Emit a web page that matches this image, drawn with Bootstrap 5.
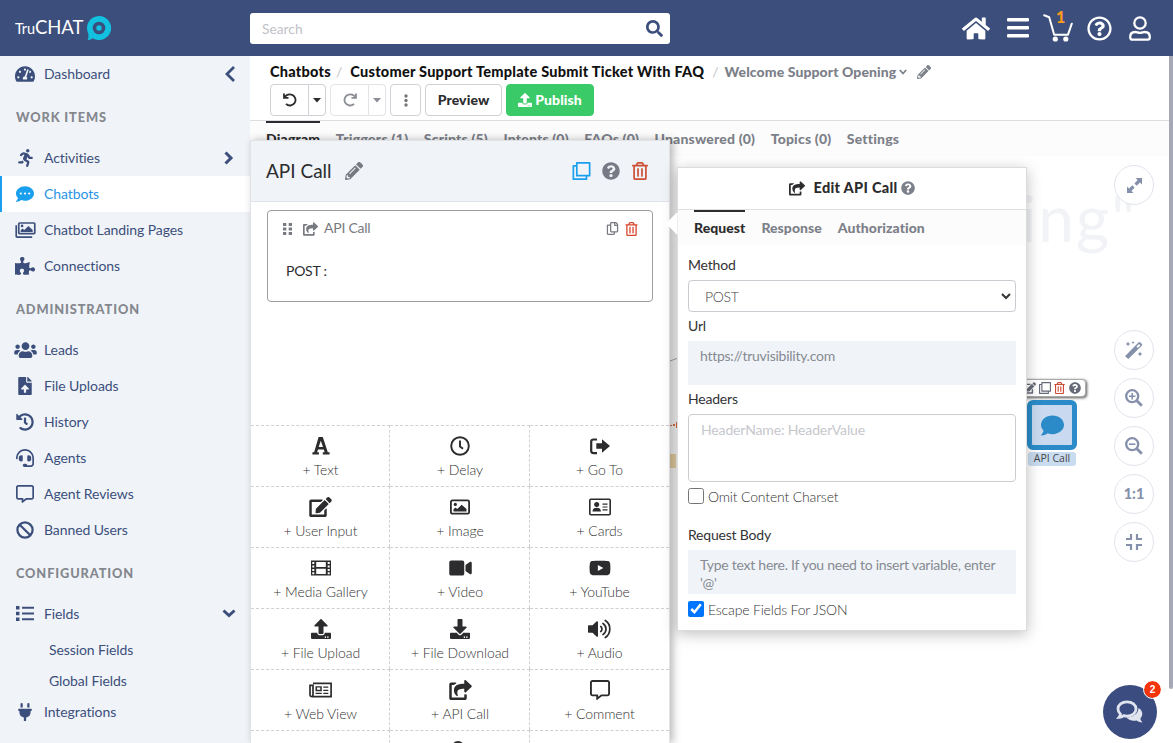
<!DOCTYPE html>
<html lang="en">
<head>
<meta charset="utf-8">
<meta name="viewport" content="width=device-width, initial-scale=1">
<title>TruCHAT</title>
<link href="https://cdn.jsdelivr.net/npm/bootstrap@5.3.0/dist/css/bootstrap.min.css" rel="stylesheet">
<style>
:root{--navy:#3c4f7c;--side:#f0f4f8;--mute:#7c8089;--ink:#2c2c2e}
html,body{height:100%;overflow:hidden}
body{font-family:Lato,"Liberation Sans",sans-serif;font-size:14px;line-height:18px;color:var(--ink);background:#fff}
svg{display:block;fill:currentColor;flex:none}
.topbar{height:56px;background:var(--navy);color:#fff;flex:none}
.logo{width:250px;padding-left:15px;letter-spacing:-.1px}
.logo small{font-size:14.5px}.logo span{font-size:18.5px}
.search{width:420px;height:31px}
.search .form-control{height:31px;font-size:13.8px;border:0;border-radius:3px;padding:0 36px 0 12px;box-shadow:none}
.search .form-control::placeholder{color:#bfc2c8;opacity:1}
.search svg{position:absolute;right:7px;top:7px;color:var(--navy)}
.count{position:absolute;left:13px;top:-6px;color:#ff9a1f;font-size:16px;font-weight:900}
.sidebar{width:250px;background:var(--side);color:var(--navy);flex:none}
.sidebar .item{height:36px;padding:0 14px 1px 12px;display:flex;align-items:center;letter-spacing:-.09px}
.sidebar .item i{width:26px;margin-right:6px;display:flex;justify-content:center}
.sidebar .item.on{background:#fff;color:#2a94e8;border-left:2px solid #1a9fee;padding-left:10px}
.sidebar .item.on i{color:#1a9fee}
.sidebar .group{height:48px;padding:1px 16px 0;display:flex;align-items:center;font-size:12.8px;font-weight:900;letter-spacing:.88px;color:#84878e}
.sub{padding:2px 0 0 49px;height:62px}
.sub div{height:31px;line-height:31px;letter-spacing:-.1px}
.crumbs{height:32px;padding-left:20px;font-weight:900;color:#111}
.crumbs .c1,.crumbs .c2{font-size:14.5px;letter-spacing:.25px}
.crumbs .c3{letter-spacing:.1px}
.crumbs .sep{color:#c5c5c8;font-weight:400}
.tools{height:33px;padding-left:20px;gap:4px}
.tools .btn{height:32px;font-size:14px;font-weight:900;letter-spacing:.1px;line-height:18px;padding:0;background:#fff;border:1px solid #cfd1d6;border-radius:4px;display:flex;align-items:center;justify-content:center;color:var(--ink)}
.tools .btn-group .btn:first-child{border-radius:4px 0 0 4px;width:39px}
.tools .btn-group .btn:last-child{border-radius:0 4px 4px 0;width:18px}
.tools .kebab{width:31px}
.tools .preview{width:77px}
.tools .btn.go{width:88px;background:#3bca68;border-color:#3bca68;color:#fff}
.tools .off .btn{color:#8b8e95;border-color:#e3e4e7}
.tabsrow{height:36px;background:#fcfcfc;border-top:1px solid #dcdee1;padding-left:16px;gap:15.5px;font-weight:900;letter-spacing:.19px;color:var(--mute)}
.tabsrow div{padding-top:9px}
.tabsrow .on{color:var(--ink);border-top:2px solid var(--ink);padding-top:7px}
.stage{flex:1;background:#fff}
.ghost{position:absolute;right:36px;top:22px;font-size:64px;line-height:80px;letter-spacing:2px;color:#f2f3f7;font-weight:400;white-space:nowrap}
.rounds{position:absolute;right:19px;top:9px;display:flex;flex-direction:column;gap:8px}
.rounds div{width:40px;height:40px;border:1px solid #e0e5ec;border-radius:50%;background:#fff;display:flex;align-items:center;justify-content:center;color:#8590ab;font-weight:900;font-size:14.5px}
.node{position:absolute;left:777px;top:244px;width:50px;height:50px;border:5px solid #2a8bc8;border-radius:6px;background:#c9daf0;color:#2a8bc8;display:flex;align-items:center;justify-content:center}
.nodelabel{position:absolute;left:778px;top:296px;width:48px;height:14px;background:#c9dcf0;border-radius:3px;font:10.5px/13px "Open Sans",sans-serif;text-align:center;color:#444;white-space:nowrap}
.nodetools{position:absolute;right:87px;top:223px;height:18px;padding:0 4px 0 2px;border:1px solid #aaa;border-radius:4px;box-shadow:1px 1px 3px #555;background:#fff;display:flex;align-items:center;gap:3px;color:#666a78}
.scroller{position:absolute;right:0;top:0;width:4px;height:633px;background:#a5a8b5;border-radius:0 0 3px 3px}
.launcher{position:absolute;right:16px;bottom:4px;width:54px;height:54px;border-radius:50%;background:#3b4d80;color:#dfe4ee;display:flex;align-items:center;justify-content:center}
.launcher b{position:absolute;left:41px;top:-4px;width:17px;height:17px;border-radius:50%;background:#f4350c;color:#fff;outline:1.5px solid #fff;font:700 10px/17px "Liberation Sans",sans-serif;text-align:center}
.panel{position:absolute;left:0;top:84px;width:420px;height:603px;background:#fff;border:1px solid #e2e3e5;border-bottom:0;box-shadow:3px 0 8px rgba(0,0,0,.28)}
.panelhead{height:61px;background:var(--side);border-bottom:1px solid #dfe2e6;padding:0 21px 1px 15px;font-size:19px}
.unit{margin:8px 16px 0;height:92px;border:1px solid #999ca1;border-radius:4px;flex:none;letter-spacing:-.25px}
.tiles{flex:none;height:318px;overflow:hidden;display:grid;grid-template-columns:139px 140px 139px;grid-auto-rows:61px}
.tiles div{border-top:1px dashed #d0d0d0;border-right:1px dashed #d0d0d0;display:flex;flex-direction:column;align-items:center;padding:10px 0 0 1px;color:#333;font-weight:300;font-size:14px;letter-spacing:-.08px}
.tiles div:nth-child(3n){border-right:0;padding-left:0}
.tiles svg{color:var(--ink);margin-bottom:5px;height:20px}
.tiles span{height:18px;white-space:nowrap}
.pop{position:absolute;left:427px;top:111px;width:350px;height:464px;background:#fff;border:1px solid #dcdcdc;box-shadow:0 3px 14px rgba(0,0,0,.25)}
.pop:before{content:"";position:absolute;left:-9px;top:47px;width:17px;height:17px;background:#fff;transform:rotate(45deg);clip-path:polygon(0 0,0 100%,100% 100%)}
.pop h6{height:42px;border-bottom:1px solid #dfe0e2;font-size:14.5px;letter-spacing:.3px;font-weight:900;margin:0;padding-bottom:1px}
.pop .tabsrow{border:0;height:36px;gap:16px;letter-spacing:.05px}
.pop .fields{padding:11px 10px 0}
.pop .lbl{height:18px;line-height:16px;color:#333;letter-spacing:-.2px}
.pop .form-select,.pop textarea.form-control{font-size:14px;color:#444;border:1px solid #c9ccd0;border-radius:4px;box-shadow:none;resize:none}
.pop .form-select{height:32px;padding:0 12px 0 16px;margin:5px 0 6px;background:#fff;font-weight:300;letter-spacing:-.3px}
.pop .box{height:44px;background:var(--side);color:#868a92;padding:6px 12px 0;margin:5px 0 6px;letter-spacing:-.26px}
.pop textarea.form-control{height:68px;padding:6px 12px;margin:5px 0 6px;line-height:18px;letter-spacing:-.14px}
.pop textarea::placeholder{color:#c6c8cc;opacity:1}
.pop input[type=checkbox]{width:16px;height:16px;margin:0 4px 0 0}
.pop .chk{display:flex;height:18px;color:#333;font-weight:300;letter-spacing:-.17px}
</style>
</head>
<body class="d-flex flex-column">
<svg width="0" height="0" style="position:absolute">
<symbol id="home" viewBox="0 0 576 512"><path d="M280.37 148.26L96 300.11V464a16 16 0 0 0 16 16l112.06-.29a16 16 0 0 0 15.92-16V368a16 16 0 0 1 16-16h64a16 16 0 0 1 16 16v95.64a16 16 0 0 0 16 16.05L464 480a16 16 0 0 0 16-16V300L295.67 148.26a12.19 12.19 0 0 0-15.3 0zM571.6 251.47L488 182.56V44.05a12 12 0 0 0-12-12h-56a12 12 0 0 0-12 12v72.61L318.47 43a48 48 0 0 0-61 0L4.34 251.47a12 12 0 0 0-1.6 16.9l25.5 31A12 12 0 0 0 45.15 301l235.22-193.74a12.19 12.19 0 0 1 15.3 0L530.9 301a12 12 0 0 0 16.9-1.6l25.5-31a12 12 0 0 0-1.7-16.93z"/></symbol>
<symbol id="bars" viewBox="0 0 22 20"><path d="M0 1a1 1 0 0 1 1-1h20a1 1 0 0 1 1 1v1.500a1 1 0 0 1-1 1H1a1 1 0 0 1-1-1zM0 9a1 1 0 0 1 1-1h20a1 1 0 0 1 1 1v1.500a1 1 0 0 1-1 1H1a1 1 0 0 1-1-1zM0 17a1 1 0 0 1 1-1h20a1 1 0 0 1 1 1v1.500a1 1 0 0 1-1 1H1a1 1 0 0 1-1-1z"/></symbol>
<symbol id="search" viewBox="0 0 512 512"><path d="M505 442.7L405.3 343c-4.5-4.5-10.6-7-17-7H372c27.600-35.300 44-79.700 44-128C416 93.100 322.900 0 208 0S0 93.100 0 208s93.100 208 208 208c48.300 0 92.700-16.400 128-44v16.300c0 6.400 2.500 12.500 7 17l99.700 99.700c9.400 9.400 24.600 9.400 33.900 0l28.300-28.300c9.400-9.400 9.400-24.600.1-34zM208 336c-70.700 0-128-57.200-128-128 0-70.700 57.200-128 128-128 70.700 0 128 57.200 128 128 0 70.700-57.200 128-128 128z"/></symbol>
<symbol id="question" viewBox="0 0 512 512"><path d="M504 256c0 136.997-111.043 248-248 248S8 392.997 8 256C8 119.083 119.043 8 256 8s248 111.083 248 248zM262.655 90c-54.497 0-89.255 22.957-116.549 63.758-3.536 5.286-2.353 12.415 2.715 16.258l34.699 26.310c5.205 3.947 12.621 3.008 16.665-2.122 17.864-22.658 30.113-35.797 57.303-35.797 20.429 0 45.698 13.148 45.698 32.958 0 14.976-12.363 22.667-32.534 33.976C247.128 238.528 216 254.941 216 296v4c0 6.627 5.373 12 12 12h56c6.627 0 12-5.373 12-12v-1.333c0-28.462 83.186-29.647 83.186-106.667 0-58.002-60.165-102-116.531-102zM256 338c-25.365 0-46 20.635-46 46 0 25.364 20.635 46 46 46s46-20.636 46-46c0-25.365-20.635-46-46-46z"/></symbol>
<symbol id="questionline" viewBox="0 0 512 512"><path d="M256 8C119.043 8 8 119.083 8 256c0 136.997 111.043 248 248 248s248-111.003 248-248C504 119.083 392.957 8 256 8zm0 448c-110.532 0-200-89.431-200-200 0-110.495 89.472-200 200-200 110.491 0 200 89.471 200 200 0 110.530-89.431 200-200 200zm107.244-255.200c0 67.052-72.421 68.084-72.421 92.863V300c0 6.627-5.373 12-12 12h-45.647c-6.627 0-12-5.373-12-12v-8.659c0-35.745 27.100-50.034 47.579-61.516 17.561-9.845 28.324-16.541 28.324-29.579 0-17.246-21.999-28.693-39.784-28.693-23.189 0-33.894 10.977-48.942 29.969-4.057 5.120-11.460 6.071-16.666 2.124l-27.824-21.098c-5.107-3.872-6.251-11.066-2.644-16.363C184.846 131.491 214.940 112 261.794 112c49.071 0 101.450 38.304 101.450 88.800zM298 368c0 23.159-18.841 42-42 42s-42-18.841-42-42 18.841-42 42-42 42 18.841 42 42z"/></symbol>
<symbol id="gauge" viewBox="0 0 576 512"><path d="M288 32C128.940 32 0 160.940 0 320c0 52.800 14.250 102.260 39.060 144.800 5.610 9.620 16.300 15.200 27.440 15.200h443c11.140 0 21.830-5.580 27.440-15.200C561.750 422.260 576 372.800 576 320c0-159.060-128.940-288-288-288zm0 64c14.710 0 26.580 10.130 30.320 23.650-1.110 2.260-2.640 4.230-3.450 6.670l-9.220 27.670c-5.130 3.490-10.970 6.010-17.640 6.010-17.670 0-32-14.330-32-32S270.330 96 288 96zM96 384c-17.670 0-32-14.330-32-32s14.330-32 32-32 32 14.330 32 32-14.330 32-32 32zm48-160c-17.670 0-32-14.330-32-32s14.330-32 32-32 32 14.330 32 32-14.330 32-32 32zm246.770-72.410l-61.330 184C343.130 347.330 352 364.540 352 384c0 11.720-3.380 22.550-8.880 32H232.880c-5.500-9.450-8.880-20.280-8.880-32 0-33.940 26.500-61.430 59.900-63.590l61.340-184.010c4.170-12.560 17.730-19.450 30.360-15.170 12.570 4.190 19.350 17.790 15.170 30.360zm14.660 57.200l15.520-46.550c3.470-1.290 7.130-2.230 11.050-2.230 17.670 0 32 14.330 32 32s-14.330 32-32 32c-11.380-.01-20.890-6.280-26.570-15.220zM480 384c-17.670 0-32-14.330-32-32s14.330-32 32-32 32 14.330 32 32-14.330 32-32 32z"/></symbol>
<symbol id="run" viewBox="0 0 416 512"><path d="M272 96c26.510 0 48-21.490 48-48S298.510 0 272 0s-48 21.490-48 48 21.490 48 48 48zM113.690 317.470l-14.800 34.520H32c-17.670 0-32 14.330-32 32s14.330 32 32 32h77.450c19.250 0 36.580-11.440 44.110-29.090l8.790-20.520-10.670-6.300c-17.320-10.230-30.060-25.370-37.990-42.610zM384 223.990h-44.030l-26.060-53.250c-12.500-25.550-35.450-44.230-61.780-50.940l-71.080-21.140c-28.300-6.800-57.770-.55-80.840 17.140l-39.670 30.410c-14.030 10.750-16.690 30.830-5.920 44.860s30.840 16.660 44.860 5.920l39.690-30.410c7.670-5.890 17.440-8 25.270-6.140l14.700 4.370-37.460 87.390c-12.620 29.480-1.310 64.010 26.300 80.310l84.980 50.170-27.470 87.730c-5.280 16.860 4.110 34.820 20.970 40.090 3.190 1 6.410 1.480 9.580 1.480 13.610 0 26.230-8.770 30.520-22.450l31.640-101.060c5.910-20.770-2.890-43.080-21.640-54.390l-61.240-36.140 31.310-78.280 20.270 41.430c8 16.340 24.920 26.890 43.110 26.890H384c17.670 0 32-14.330 32-32s-14.330-31.990-32-31.990z"/></symbol>
<symbol id="comment" viewBox="0 0 512 512"><path d="M256 32C114.600 32 0 125.100 0 240c0 49.600 21.400 95 57 130.700C44.500 421.100 2.700 466 2.200 466.500c-2.200 2.300-2.800 5.700-1.500 8.700S4.800 480 8 480c66.300 0 116-31.800 140.600-51.400 32.700 12.300 69 19.400 107.400 19.400 141.400 0 256-93.100 256-208S397.400 32 256 32z"/></symbol>
<symbol id="images" viewBox="0 0 576 512"><path fill="none" stroke="currentColor" stroke-width="48" stroke-linejoin="round" d="M120 56h408a24 24 0 0 1 24 24v256a24 24 0 0 1-24 24H120a24 24 0 0 1-24-24V80a24 24 0 0 1 24-24zM24 120v312a24 24 0 0 0 24 24h430"/><circle cx="190" cy="140" r="38"/><path d="M150 310v-50l55-50 48 45L370 140l122 115v55z"/></symbol>
<symbol id="puzzle" viewBox="0 0 576 512"><path d="M519.442 288.651c-41.519 0-59.500 31.593-82.058 31.593C377.409 320.244 432 144 432 144s-196.288 80-196.288-3.297c0-35.827 36.288-46.250 36.288-85.985C272 19.216 243.885 0 210.539 0c-34.654 0-66.366 18.891-66.366 56.346 0 41.364 31.711 59.277 31.711 81.750C175.885 207.719 0 166.758 0 166.758v333.237s178.635 41.047 178.635-28.662c0-22.473-40-40.107-40-81.471 0-37.456 29.250-56.346 63.577-56.346 33.673 0 61.788 19.216 61.788 54.717 0 39.735-36.288 50.158-36.288 85.985 0 60.803 129.675 25.730 181.230 25.730 0 0-34.725-120.101 25.827-120.101 35.962 0 46.423 36.152 86.308 36.152C556.712 416 576 387.990 576 354.443c0-34.199-18.962-65.792-56.558-65.792z"/></symbol>
<symbol id="users" viewBox="0 0 640 512"><path d="M96 224c35.300 0 64-28.700 64-64s-28.700-64-64-64-64 28.700-64 64 28.700 64 64 64zm448 0c35.300 0 64-28.700 64-64s-28.700-64-64-64-64 28.700-64 64 28.700 64 64 64zm32 32h-64c-17.600 0-33.500 7.100-45.100 18.600 40.300 22.100 68.900 62 75.100 109.400h66c17.700 0 32-14.300 32-32v-32c0-35.300-28.700-64-64-64zm-256 0c61.900 0 112-50.100 112-112S381.900 32 320 32 208 82.100 208 144s50.100 112 112 112zm76.800 32h-8.300c-20.800 10-43.900 16-68.500 16s-47.600-6-68.500-16h-8.300C179.600 288 128 339.600 128 403.200V432c0 26.500 21.500 48 48 48h288c26.500 0 48-21.500 48-48v-28.800c0-63.600-51.600-115.200-115.200-115.200zm-223.700-13.400C161.500 263.100 145.600 256 128 256H64c-35.300 0-64 28.700-64 64v32c0 17.700 14.300 32 32 32h65.900c6.300-47.400 34.900-87.300 75.200-109.400z"/></symbol>
<symbol id="fileup" viewBox="0 0 384 512"><path d="M224 136V0H24C10.700 0 0 10.700 0 24v464c0 13.300 10.700 24 24 24h336c13.300 0 24-10.700 24-24V160H248c-13.200 0-24-10.800-24-24zm65.180 216.010H224v80c0 8.840-7.160 16-16 16h-32c-8.840 0-16-7.160-16-16v-80H94.820c-14.280 0-21.410-17.290-11.270-27.360l96.420-95.700c6.650-6.610 17.390-6.610 24.040 0l96.420 95.700c10.150 10.070 3.030 27.360-11.250 27.360zM377 105L279.100 7c-4.500-4.500-10.600-7-17-7H256v128h128v-6.100c0-6.300-2.500-12.400-7-16.900z"/></symbol>
<symbol id="history" viewBox="0 0 512 512"><path d="M504 255.531c.253 136.640-111.180 248.372-247.820 248.468-59.015.042-113.223-20.530-155.822-54.911-11.077-8.940-11.905-25.541-1.839-35.607l11.267-11.267c8.609-8.609 22.353-9.551 31.891-1.984C173.062 425.135 212.781 440 256 440c101.705 0 184-82.311 184-184 0-101.705-82.311-184-184-184-48.814 0-93.149 18.969-126.068 49.932l50.754 50.754c10.080 10.080 2.941 27.314-11.313 27.314H24c-8.837 0-16-7.163-16-16V38.627c0-14.254 17.234-21.393 27.314-11.314l49.372 49.372C129.209 34.136 189.552 8 256 8c136.810 0 247.747 110.780 248 247.531zm-180.912 78.784l9.823-12.630c8.138-10.463 6.253-25.542-4.210-33.679L288 256.349V152c0-13.255-10.745-24-24-24h-16c-13.255 0-24 10.745-24 24v135.651l65.409 50.874c10.463 8.137 25.541 6.253 33.679-4.210z"/></symbol>
<symbol id="headset" viewBox="0 0 512 512"><path d="M192 208c0-17.670-14.330-32-32-32h-16c-35.350 0-64 28.650-64 64v48c0 35.350 28.650 64 64 64h16c17.670 0 32-14.330 32-32V208zm176 144c35.350 0 64-28.650 64-64v-48c0-35.350-28.650-64-64-64h-16c-17.670 0-32 14.330-32 32v112c0 17.670 14.330 32 32 32h16zM256 0C113.180 0 4.580 118.830 0 256v16c0 8.840 7.160 16 16 16h16c8.840 0 16-7.160 16-16v-16c0-114.690 93.310-208 208-208s208 93.310 208 208h-.12c.08 2.430.12 165.720.12 165.720 0 23.350-18.930 42.280-42.280 42.280H320c0-26.510-21.490-48-48-48h-32c-26.510 0-48 21.490-48 48s21.490 48 48 48h181.720c49.860 0 90.280-40.420 90.280-90.280V256C507.420 118.830 398.820 0 256 0z"/></symbol>
<symbol id="commentbox" viewBox="0 0 512 512"><path d="M448 0H64C28.700 0 0 28.700 0 64v288c0 35.300 28.700 64 64 64h96v84c0 7.100 5.800 12 12 12 2.400 0 4.900-.7 7.100-2.400L304 416h144c35.300 0 64-28.700 64-64V64c0-35.300-28.700-64-64-64zm16 352c0 8.800-7.200 16-16 16H288l-12.800 9.600L208 428v-60H64c-8.800 0-16-7.200-16-16V64c0-8.800 7.200-16 16-16h384c8.800 0 16 7.200 16 16v288z"/></symbol>
<symbol id="ban" viewBox="0 0 512 512"><g fill="none" stroke="currentColor" stroke-width="64"><circle cx="256" cy="256" r="216"/><path d="M105 105l302 302"/></g></symbol>
<symbol id="list" viewBox="0 0 18 15"><path d="M0 0h3.500v3.500H0zM0 5.800h3.500v3.500H0zM0 11.500h3.500V15H0zM6 .7h12v2H6zM6 6.500h12v2H6zM6 12.300h12v2H6z"/></symbol>
<symbol id="plug" viewBox="0 0 384 512"><path d="M320,32a32,32,0,0,0-64,0v96h64Zm48,128H16A16,16,0,0,0,0,176v32a16,16,0,0,0,16,16H32v32A160.070,160.070,0,0,0,160,412.800V512h64V412.800A160.070,160.070,0,0,0,352,256V224h16a16,16,0,0,0,16-16V176A16,16,0,0,0,368,160ZM128,32a32,32,0,0,0-64,0v96h64Z"/></symbol>
<symbol id="pencil" viewBox="0 0 512 512"><path d="M497.900 142.100l-46.100 46.100c-4.700 4.700-12.300 4.700-17 0l-111-111c-4.700-4.700-4.700-12.300 0-17l46.100-46.100c18.700-18.700 49.100-18.700 67.900 0l60.100 60.100c18.800 18.700 18.800 49.100 0 67.900zM284.200 99.800L21.600 362.400.4 483.900c-2.900 16.400 11.400 30.600 27.800 27.800l121.500-21.300 262.600-262.600c4.700-4.700 4.700-12.300 0-17l-111-111c-4.800-4.700-12.400-4.700-17.100 0zM124.100 339.900c-5.500-5.500-5.500-14.300 0-19.800l154-154c5.500-5.500 14.300-5.500 19.800 0s5.500 14.300 0 19.800l-154 154c-5.500 5.500-14.300 5.500-19.800 0zM88 424h48v36.300l-64.500 11.300-31.100-31.100L51.700 376H88v48z"/></symbol>
<symbol id="edit" viewBox="0 0 576 512"><path d="M402.600 83.200l90.200 90.200c3.800 3.800 3.800 10 0 13.800L274.400 405.600l-92.800 10.300c-12.400 1.400-22.900-9.100-21.500-21.500l10.300-92.800L388.800 83.200c3.800-3.800 10-3.800 13.800 0zm162-22.900l-48.800-48.800c-15.200-15.200-39.900-15.200-55.200 0l-35.400 35.400c-3.800 3.800-3.800 10 0 13.800l90.200 90.200c3.800 3.800 10 3.800 13.800 0l35.400-35.400c15.200-15.300 15.200-40 0-55.200zM384 346.200V448H64V128h229.800c3.200 0 6.200-1.300 8.500-3.500l40-40c7.600-7.600 2.200-20.500-8.500-20.500H48C21.500 64 0 85.500 0 112v352c0 26.500 21.500 48 48 48h352c26.500 0 48-21.500 48-48V306.200c0-10.700-12.900-16-20.500-8.500l-40 40c-2.200 2.300-3.500 5.300-3.500 8.500z"/></symbol>
<symbol id="share" viewBox="0 0 576 512"><path d="M568.482 177.448L424.479 313.433C409.300 327.768 384 317.140 384 295.985v-71.963c-144.575.970-205.566 35.113-164.775 171.353 4.483 14.973-12.846 26.567-25.006 17.330C155.252 383.105 120 326.488 120 269.339c0-143.937 117.599-172.500 264-173.312V24.012c0-21.174 25.317-31.768 40.479-17.448l144.003 135.988c10.020 9.463 10.028 25.425 0 34.896zM384 379.128V448H64V128h50.916a11.990 11.990 0 0 0 8.648-3.693c14.953-15.568 32.237-27.890 51.014-37.676C185.708 80.830 181.584 64 169.033 64H48C21.490 64 0 85.490 0 112v352c0 26.510 21.490 48 48 48h352c26.510 0 48-21.490 48-48v-88.806c0-8.288-8.197-14.066-16.011-11.302a71.830 71.830 0 0 1-34.189 3.377c-7.270-1.046-13.800 4.514-13.800 11.859z"/></symbol>
<symbol id="trash" viewBox="0 0 448 512"><path d="M268 416h24a12 12 0 0 0 12-12V188a12 12 0 0 0-12-12h-24a12 12 0 0 0-12 12v216a12 12 0 0 0 12 12zM432 80h-82.410l-34-56.700A48 48 0 0 0 274.410 0H173.590a48 48 0 0 0-41.160 23.300L98.410 80H16A16 16 0 0 0 0 96v16a16 16 0 0 0 16 16h16v336a48 48 0 0 0 48 48h288a48 48 0 0 0 48-48V128h16a16 16 0 0 0 16-16V96a16 16 0 0 0-16-16zM171.840 50.910A6 6 0 0 1 177 48h94a6 6 0 0 1 5.150 2.910L293.610 80H154.390zM368 464H80V128h288zm-212-48h24a12 12 0 0 0 12-12V188a12 12 0 0 0-12-12h-24a12 12 0 0 0-12 12v216a12 12 0 0 0 12 12z"/></symbol>
<symbol id="copy" viewBox="0 0 448 512"><path d="M433.941 65.941l-51.882-51.882A48 48 0 0 0 348.118 0H176c-26.510 0-48 21.490-48 48v48H48c-26.510 0-48 21.490-48 48v320c0 26.510 21.490 48 48 48h224c26.510 0 48-21.490 48-48v-48h80c26.510 0 48-21.490 48-48V99.882a48 48 0 0 0-14.059-33.941zM266 464H54a6 6 0 0 1-6-6V150a6 6 0 0 1 6-6h74v224c0 26.510 21.490 48 48 48h96v42a6 6 0 0 1-6 6zm128-96H182a6 6 0 0 1-6-6V54a6 6 0 0 1 6-6h106v88c0 13.255 10.745 24 24 24h88v202a6 6 0 0 1-6 6zm6-256h-64V48h9.632c1.591 0 3.117.632 4.243 1.757l48.368 48.368a6 6 0 0 1 1.757 4.243V112z"/></symbol>
<symbol id="clone" viewBox="0 0 18 18"><path fill="none" stroke="currentColor" stroke-width="1.700" stroke-linejoin="round" d="M4.300.85h12.850v12.850H4.300zM4 3.800H.85v13.350H14V14"/></symbol>
<symbol id="video" viewBox="0 0 576 512"><path d="M336.200 64H47.800C21.400 64 0 85.400 0 111.800v288.400C0 426.600 21.400 448 47.800 448h288.400c26.400 0 47.800-21.400 47.800-47.800V111.800c0-26.400-21.400-47.800-47.800-47.800zm189.400 37.700L416 177.300v157.400l109.600 75.500c21.200 14.600 50.400-.3 50.400-25.800V127.500c0-25.400-29.100-40.400-50.400-25.800z"/></symbol>
<symbol id="youtube" viewBox="0 0 576 512"><path d="M549.655 124.083c-6.281-23.650-24.787-42.276-48.284-48.597C458.781 64 288 64 288 64S117.220 64 74.629 75.486c-23.497 6.322-42.003 24.947-48.284 48.597-11.412 42.867-11.412 132.305-11.412 132.305s0 89.438 11.412 132.305c6.281 23.650 24.787 41.500 48.284 47.821C117.220 448 288 448 288 448s170.780 0 213.371-11.486c23.497-6.321 42.003-24.171 48.284-47.821 11.412-42.867 11.412-132.305 11.412-132.305s0-89.438-11.412-132.305zm-317.510 213.508V175.185l142.739 81.205-142.739 81.201z"/></symbol>
<symbol id="upload" viewBox="0 0 512 512"><path d="M296 384h-80c-13.300 0-24-10.700-24-24V192h-87.700c-17.800 0-26.700-21.500-14.100-34.100L242.300 5.700c7.500-7.500 19.800-7.500 27.300 0l152.200 152.200c12.600 12.600 3.700 34.100-14.100 34.100H320v168c0 13.300-10.700 24-24 24zm216-8v112c0 13.300-10.700 24-24 24H24c-13.300 0-24-10.700-24-24V376c0-13.300 10.700-24 24-24h136v8c0 30.900 25.100 56 56 56h80c30.900 0 56-25.100 56-56v-8h136c13.300 0 24 10.700 24 24zm-124 88c0-11-9-20-20-20s-20 9-20 20 9 20 20 20 20-9 20-20zm64 0c0-11-9-20-20-20s-20 9-20 20 9 20 20 20 20-9 20-20z"/></symbol>
<symbol id="download" viewBox="0 0 512 512"><path d="M216 0h80c13.300 0 24 10.700 24 24v168h87.700c17.800 0 26.700 21.500 14.100 34.100L269.700 378.300c-7.500 7.500-19.800 7.500-27.300 0L90.100 226.100c-12.600-12.600-3.700-34.100 14.100-34.100H192V24c0-13.300 10.700-24 24-24zm296 376v112c0 13.300-10.700 24-24 24H24c-13.300 0-24-10.700-24-24V376c0-13.300 10.700-24 24-24h146.700l49 49c20.100 20.100 52.500 20.100 72.600 0l49-49H488c13.300 0 24 10.700 24 24zm-124 88c0-11-9-20-20-20s-20 9-20 20 9 20 20 20 20-9 20-20zm64 0c0-11-9-20-20-20s-20 9-20 20 9 20 20 20 20-9 20-20z"/></symbol>
<symbol id="undo" viewBox="0 0 14 14"><path fill="none" stroke="currentColor" stroke-width="1.800" d="M1 .5v4.300h4.500M1.400 4.600C3 1.900 6 1 8.400 1.700a5.500 5.500 0 1 1-5.400 9.100"/></symbol>
<symbol id="mag" viewBox="0 0 18 18"><path fill="none" stroke="currentColor" stroke-width="2.800" d="M11.800 11.800l5 5"/><circle cx="7.200" cy="7.200" r="6" fill="none" stroke="currentColor" stroke-width="2.300"/></symbol>
</svg>

<header class="topbar d-flex align-items-center">
  <div class="logo d-flex align-items-center"><div><small>Tru</small><span>CHAT</span></div>
    <svg style="margin-left:4px" width="24" height="24" viewBox="0 0 24 24"><path fill="#12c0e0" d="M12 0a12 12 0 1 1-6.200 22.200C4.500 23.400 2.600 24 .5 24c1-1.500 1.200-3 .8-6.500A12 12 0 0 1 12 0z"/><circle cx="12" cy="12" r="6.300" fill="#3c4f7c"/><circle cx="12" cy="12" r="2.700" fill="#12c0e0"/></svg></div>
  <div class="search position-relative"><input class="form-control" placeholder="Search"><svg width="17" height="17"><use href="#search"/></svg></div>
  <div class="ms-auto d-flex align-items-center" style="padding-right:22px">
    <svg width="28" height="25"><use href="#home"/></svg>
    <svg width="22" height="20" style="margin-left:17px"><use href="#bars"/></svg>
    <div class="position-relative" style="margin-left:14px"><svg width="30" height="28" viewBox="0 0 30 28"><path fill="none" stroke="#fff" stroke-width="2" stroke-linecap="round" stroke-linejoin="round" d="M1.200 1.300l5 2 5 17.400H25l3.800-11"/><circle cx="12.300" cy="25" r="2.600"/><circle cx="22.800" cy="25" r="2.600"/></svg><span class="count">1</span></div>
    <svg width="25" height="25" style="margin-left:14px"><use href="#questionline"/></svg>
    <svg width="22" height="25" viewBox="0 0 22 25" style="margin-left:17px"><g fill="none" stroke="#fff" stroke-width="2.300"><circle cx="11" cy="7" r="5.700"/><path d="M1.200 21c0-3.500 2.200-5 5-5 1.700 0 2.800.9 4.800.9s3.100-.9 4.800-.9c2.800 0 5 1.500 5 5 0 1.700-.8 2.700-2 2.700H3.200c-1.200 0-2-1-2-2.700z"/></g></svg>
  </div>
</header>

<div class="d-flex flex-grow-1">
<nav class="sidebar">
  <div class="item"><i><svg width="20" height="18"><use href="#gauge"/></svg></i>Dashboard<svg class="ms-auto" width="12" height="16" viewBox="0 0 12 16"><path fill="none" stroke="currentColor" stroke-width="2.800" d="M10 1L3 8l7 7"/></svg></div>
  <div class="group">WORK ITEMS</div>
  <div class="item"><i><svg width="15" height="18"><use href="#run"/></svg></i>Activities<svg class="ms-auto" width="12" height="14" viewBox="0 0 12 14"><path fill="none" stroke="currentColor" stroke-width="3" d="M1.500 1.500L7 7l-5.500 5.500"/></svg></div>
  <div class="item on"><i><svg width="18" height="18" viewBox="0 0 18 18"><use href="#comment"/><g fill="#fff"><circle cx="4.800" cy="8.500" r="1.100"/><circle cx="9" cy="8.500" r="1.100"/><circle cx="13.200" cy="8.500" r="1.100"/></g></svg></i>Chatbots</div>
  <div class="item"><i><svg width="21" height="18"><use href="#images"/></svg></i>Chatbot Landing Pages</div>
  <div class="item"><i><svg width="20" height="18"><use href="#puzzle"/></svg></i>Connections</div>
  <div class="group">ADMINISTRATION</div>
  <div class="item"><i><svg width="23" height="18"><use href="#users"/></svg></i>Leads</div>
  <div class="item"><i><svg width="14" height="18"><use href="#fileup"/></svg></i>File Uploads</div>
  <div class="item"><i><svg width="18" height="18"><use href="#history"/></svg></i>History</div>
  <div class="item"><i><svg width="18" height="18"><use href="#headset"/></svg></i>Agents</div>
  <div class="item"><i><svg width="18" height="18"><use href="#commentbox"/></svg></i>Agent Reviews</div>
  <div class="item"><i><svg width="18" height="18"><use href="#ban"/></svg></i>Banned Users</div>
  <div class="group">CONFIGURATION</div>
  <div class="item"><i><svg width="18" height="15"><use href="#list"/></svg></i>Fields<svg class="ms-auto" width="14" height="9" viewBox="0 0 14 9"><path fill="none" stroke="currentColor" stroke-width="3" d="M1.500 1.500L7 6.500l5.500-5"/></svg></div>
  <div class="sub"><div>Session Fields</div><div>Global Fields</div></div>
  <div class="item"><i><svg width="14" height="18"><use href="#plug"/></svg></i>Integrations</div>
</nav>

<main class="flex-grow-1 d-flex flex-column position-relative">
  <div class="crumbs d-flex align-items-center"><span class="c1">Chatbots</span><span class="sep" style="margin:0 8px 0 5px">/</span><span class="c2">Customer Support Template Submit Ticket With FAQ</span><span class="sep" style="margin:0 6px 0 8px">/</span><span class="c3" style="color:var(--mute)">Welcome Support Opening</span><svg style="margin-left:3px;color:#7c8089" width="8" height="6" viewBox="0 0 8 6"><path fill="none" stroke="currentColor" stroke-width="1.800" d="M.8 1L4 4.500 7.200 1"/></svg><svg style="margin-left:10px;color:#7c8089" width="14" height="14"><use href="#pencil"/></svg></div>
  <div class="tools d-flex" style="margin-top:-4px">
    <div class="btn-group"><div class="btn"><svg width="14" height="14"><use href="#undo"/></svg></div><div class="btn"><svg width="8" height="5" viewBox="0 0 8 5"><path d="M0 0h8L4 4.500z"/></svg></div></div>
    <div class="btn-group off"><div class="btn"><svg width="14" height="14" style="transform:scaleX(-1)"><use href="#undo"/></svg></div><div class="btn"><svg width="8" height="5" viewBox="0 0 8 5"><path d="M0 0h8L4 4.500z"/></svg></div></div>
    <div class="btn kebab"><svg width="4" height="13" viewBox="0 0 4 13" style="color:#777"><circle cx="2" cy="2" r="1.700"/><circle cx="2" cy="6.500" r="1.700"/><circle cx="2" cy="11" r="1.700"/></svg></div>
    <div class="btn preview">Preview</div>
    <div class="btn go"><svg style="margin-right:3px" width="14" height="14"><use href="#upload"/></svg>Publish</div>
  </div>
  <div class="tabsrow d-flex" style="margin-top:3px"><div class="on">Diagram</div><div style="letter-spacing:.3px">Triggers (1)</div><div>Scripts (5)</div><div>Intents (0)</div><div>FAQs (0)</div><div>Unanswered (0)</div><div>Topics (0)</div><div>Settings</div></div>

  <section class="stage position-relative">
    <div class="ghost">"Welcome Support Opening"</div>
    <svg style="position:absolute;left:416px;top:196px" width="12" height="130" viewBox="0 0 12 130"><path fill="none" stroke="#aaa" d="M4 9l8-3"/><path fill="#e07040" d="M4 73h2v1H4zM7 72h2v2H7zM10 70h1v6h-1z"/><path fill="#f0d9a8" d="M4 102h6v14H4z"/></svg>
    <div class="nodetools"><svg width="13" height="12"><use href="#edit"/></svg><svg width="12" height="12"><use href="#clone"/></svg><svg width="11" height="12" style="color:#cf4a35"><use href="#trash"/></svg><svg width="12" height="12" style="margin-left:1px"><use href="#question"/></svg></div>
    <div class="node"><svg width="23" height="23"><use href="#comment"/></svg></div>
    <div class="nodelabel">API Call</div>
    <div class="rounds">
      <div style="margin-bottom:117px"><svg width="17" height="17" viewBox="0 0 17 17"><path d="M9.500 1H16v6.500l-2-2-3.300 3.200-2.300-2.300 3.200-3.300zM7.500 16H1V9.500l2 2 3.300-3.200 2.300 2.300L5.500 14z"/></svg></div>
      <div><svg width="18" height="18" viewBox="0 0 18 18"><path fill-rule="evenodd" d="M0 15.200L13.400 1.500a1.500 1.500 0 0 1 2.100 0l1.200 1.200a1.500 1.500 0 0 1 0 2.100L3.300 18zM11.500 5.600l1.300 1.300 2.500-2.500L14 3.100zM3 .5l.8 1.700 1.700.8-1.700.8L3 5.500l-.8-1.700L.5 3l1.700-.8zM8 0l.5 1.100 1.100.5-1.100.5L8 3.200l-.5-1.100-1.100-.5 1.100-.5zM15 10.500l.8 1.700 1.700.8-1.700.8-.8 1.700-.8-1.700-1.700-.8 1.700-.8z"/></svg></div>
      <div><svg width="18" height="18" viewBox="0 0 18 18"><use href="#mag"/><path d="M4 6.400h2.400V4H8v2.400h2.400V8H8v2.400H6.400V8H4z"/></svg></div>
      <div><svg width="18" height="18" viewBox="0 0 18 18"><use href="#mag"/><path d="M4 6.400h6.400V8H4z"/></svg></div>
      <div>1:1</div>
      <div><svg width="16" height="16" viewBox="0 0 16 16"><path fill="none" stroke="currentColor" stroke-width="2.200" d="M5 0v5H0M11 0v5h5M5 16v-5H0M11 16v-5h5"/></svg></div>
    </div>
  </section>

  <aside class="panel d-flex flex-column">
    <div class="panelhead d-flex align-items-center"><span>API Call</span><svg style="margin-left:13px;color:#777a80" width="18" height="18"><use href="#pencil"/></svg>
      <svg class="ms-auto" style="color:#1a9fee" width="19" height="18"><use href="#clone"/></svg><svg style="margin-left:11px;color:#777a85" width="18" height="18"><use href="#question"/></svg><svg style="margin-left:12px;color:#cc4e36" width="16" height="18"><use href="#trash"/></svg></div>
    <div class="unit">
      <div class="d-flex align-items-center" style="padding:8px 14px 0 15px;height:27px;color:#777a80"><svg width="9" height="12" viewBox="0 0 9 12"><path d="M0 0h3.300v3H0zM5.700 0H9v3H5.700zM0 4.500h3.300v3H0zM5.700 4.500H9v3H5.700zM0 9h3.300v3H0zM5.700 9H9v3H5.700z"/></svg><svg style="margin-left:11px" width="15" height="14"><use href="#share"/></svg><span style="margin-left:6px;padding-bottom:2px">API Call</span><svg class="ms-auto" width="13" height="13"><use href="#copy"/></svg><svg style="margin-left:6px;color:#d9482e" width="13" height="14"><use href="#trash"/></svg></div>
      <div style="padding:24px 0 0 18px">POST :</div>
    </div>
    <div class="flex-grow-1"></div>
    <div class="tiles">
      <div><svg width="18" height="18" viewBox="0 0 18 18"><path d="M6.600 0h4.200l5 15.300H17.600V17.600H10.800V15.300h1.800l-.8-2.800H6l-.9 2.800h1.800v2.300H.4v-2.300h1.700zM8.800 3.700L6.700 10h4.300z"/></svg><span>+ Text</span></div>
      <div><svg width="20" height="20" viewBox="0 0 20 20"><g fill="none" stroke="currentColor" stroke-width="1.900"><circle cx="10" cy="10" r="8.800"/><path d="M10 4.500v6l3 2.200"/></g></svg><span>+ Delay</span></div>
      <div><svg width="20" height="18" viewBox="0 0 20 18"><path d="M12 2.300v4H6.300v5.400H12v4L20 9z"/><path fill="none" stroke="currentColor" stroke-width="2.200" d="M7 2.500H3.500C2 2.500 1.200 3.300 1.200 4.800v9c0 1.500.8 2.300 2.300 2.300H7"/></svg><span>+ Go To</span></div>
      <div><svg width="23" height="20"><use href="#edit"/></svg><span>+ User Input</span></div>
      <div><svg width="20" height="18" viewBox="0 0 20 18"><rect x=".9" y="2.400" width="18.200" height="13.300" rx="1.500" fill="none" stroke="currentColor" stroke-width="1.800"/><circle cx="5.300" cy="6.400" r="1.600"/><path d="M3.500 13.500v-2.300l2-1.700 1.700 1.600 4.500-4.400 4.800 4.400v2.400z"/></svg><span>+ Image</span></div>
      <div><svg width="22" height="18" viewBox="0 0 22 18"><rect x=".8" y="1.300" width="20.400" height="15.400" rx="1" fill="none" stroke="currentColor" stroke-width="1.600"/><circle cx="7.700" cy="6.600" r="2.500"/><path d="M3.500 13.500c0-2.500 1.500-3.700 4.200-3.700s4.200 1.200 4.200 3.700zM13.500 5.500h5v1.200h-5zM13.500 8.400h5v1.200h-5zM13.500 11.300h5v1.200h-5z"/></svg><span>+ Cards</span></div>
      <div><svg width="20" height="18" viewBox="0 0 20 18"><path fill-rule="evenodd" d="M0 1.500h20v15H0zM1.300 3v2h2V3zM1.300 6.600v2h2v-2zM1.300 10v2h2v-2zM1.300 13.200v2h2v-2zM16.700 3v2h2V3zM16.700 6.600v2h2v-2zM16.700 10v2h2v-2zM16.700 13.200v2h2v-2zM5.200 3v5h9.600V3zM5.200 9.700v5.300h9.600V9.700z"/></svg><span>+ Media Gallery</span></div>
      <div><svg width="23" height="20"><use href="#video"/></svg><span>+ Video</span></div>
      <div><svg width="22" height="20"><use href="#youtube"/></svg><span>+ YouTube</span></div>
      <div><svg width="20" height="20"><use href="#upload"/></svg><span>+ File Upload</span></div>
      <div><svg width="20" height="20"><use href="#download"/></svg><span>+ File Download</span></div>
      <div><svg width="23" height="20" viewBox="0 0 23 20"><path d="M0 7.300C0 6.600.4 6.200 1 6.200h3.500L8.500 2.500c.7-.6 1.500-.2 1.500.6v13.800c0 .8-.8 1.200-1.500.6l-4-3.700H1c-.6 0-1-.4-1-1z"/><path fill="none" stroke="currentColor" stroke-width="1.700" stroke-linecap="round" d="M12.800 7.500c1.500 1 1.500 4 0 5M15 4.500c4 2.600 4 8.400 0 11M17.300 1.500c6 3.700 6 13.300 0 17"/></svg><span>+ Audio</span></div>
      <div><svg width="23" height="18" viewBox="0 0 23 18"><path fill="none" stroke="currentColor" stroke-width="1.700" d="M4 2.300h18.100v13.400H3.300C1.600 15.700 1 15 1 13.500V4.300h3v9.500c0 1.200-.5 1.900-1.500 1.900"/><path fill-rule="evenodd" d="M6.500 5.200h6.300v5H6.500zM8 6.600v2.200h3.300V6.600zM14.300 5.500h5v1.300h-5zM14.300 8.700h5V10h-5zM6.500 11.700h6.300V13H6.500zM14.300 11.700h5V13h-5z"/></svg><span>+ Web View</span></div>
      <div><svg width="23" height="20"><use href="#share"/></svg><span>+ API Call</span></div>
      <div><svg width="20" height="20"><use href="#commentbox"/></svg><span>+ Comment</span></div>
      <div></div>
      <div><svg width="20" height="20" viewBox="0 0 20 20"><circle cx="8" cy="6.500" r="6.500"/></svg></div>
      <div></div>
    </div>
  </aside>

  <div class="pop">
    <h6 class="d-flex align-items-center justify-content-center"><svg style="margin-right:9px" width="16" height="15"><use href="#share"/></svg>Edit API Call<svg style="margin-left:4px;color:#7c8089" width="14" height="14"><use href="#question"/></svg></h6>
    <div class="tabsrow d-flex"><div class="on">Request</div><div>Response</div><div>Authorization</div></div>
    <div class="fields">
      <div class="lbl">Method</div>
      <div class="position-relative"><select class="form-select"><option>POST</option></select><svg style="position:absolute;right:5px;top:13px" width="10" height="7" viewBox="0 0 10 7"><path fill="none" stroke="#333" stroke-width="2" d="M1 1l4 4 4-4"/></svg></div>
      <div class="lbl">Url</div>
      <div class="box">https://truvisibility.com</div>
      <div class="lbl">Headers</div>
      <textarea class="form-control" placeholder="HeaderName: HeaderValue"></textarea>
      <div class="chk"><input type="checkbox"><span>Omit Content Charset</span></div>
      <div class="lbl" style="margin-top:21px">Request Body</div>
      <div class="box" style="margin-bottom:7px">Type text here. If you need to insert variable, enter '@'</div>
      <div class="chk"><input type="checkbox" checked><span>Escape Fields For JSON</span></div>
    </div>
  </div>

  <div class="scroller"></div>
  <div class="launcher"><svg width="28" height="24" viewBox="0 0 28 24"><path fill="none" stroke="currentColor" stroke-width="2.800" d="M11 1.800c5.200 0 9 3.200 9 7.200s-3.800 7.200-9 7.200c-1.200 0-2.300-.2-3.300-.5-1.300 1-2.900 1.600-4.700 1.700.8-1 1.300-2 1.500-3.200C2.900 12.800 2 11 2 9c0-4 3.800-7.200 9-7.200z"/><path d="M22.500 8c2.300 1.200 3.800 3.300 3.800 5.800 0 1.800-.8 3.400-2 4.600.3 1.500 1.100 2.900 2.200 4-2.300 0-4.300-.7-5.900-1.900-4.200 1-8.300-.4-10.200-3.200 6.500.2 11.800-3.300 12.100-9.300z"/></svg><b>2</b></div>
</main>
</div>
<script src="https://cdn.jsdelivr.net/npm/bootstrap@5.3.0/dist/js/bootstrap.bundle.min.js"></script>
</body>
</html>
